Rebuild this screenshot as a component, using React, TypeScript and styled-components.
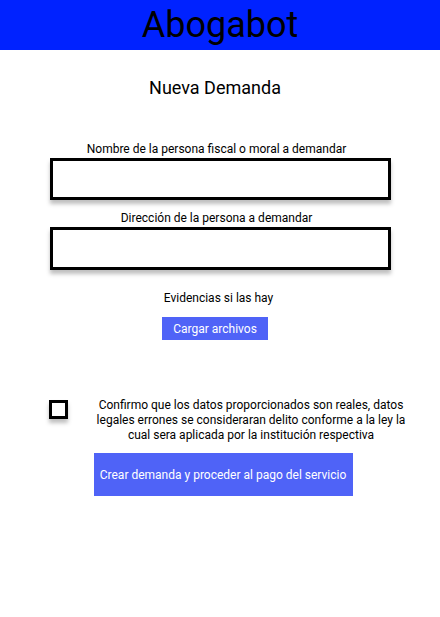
import styled, { createGlobalStyle } from 'styled-components';

const GlobalStyle = createGlobalStyle`
  body {
    margin: 0;
    font-family: Roboto, 'Liberation Sans', sans-serif;
    background: #fff;
    color: #000;
  }
`;

const Page = styled.div`
  width: 440px;
  min-height: 617px;
  display: flex;
  flex-direction: column;
`;

const Header = styled.header`
  height: 50px;
  background: #0022ff;
  display: flex;
  align-items: center;
  justify-content: center;
`;

const Brand = styled.h1`
  margin: 0;
  font-size: 36px;
  font-weight: 400;
  line-height: 50px;
`;

const Form = styled.main`
  display: flex;
  flex-direction: column;
  align-items: center;
`;

const Title = styled.h2`
  margin: 27px 10px 0 0;
  font-size: 18px;
  font-weight: 400;
  line-height: 21px;
  text-align: center;
`;

const Label = styled.label<{ top: number }>`
  margin: ${({ top }) => top}px 7px 0 0;
  font-size: 12px;
  line-height: 14px;
`;

const Field = styled.input<{ h: number }>`
  box-sizing: border-box;
  width: 341px;
  height: ${({ h }) => h}px;
  margin: 2px 0 0 0;
  border: 3px solid #000;
  outline: none;
  background: #fff;
  box-shadow: 0 4px 4px rgba(0, 0, 0, 0.25);
`;

const Caption = styled.p`
  margin: 21px 3px 0 0;
  font-size: 12px;
  line-height: 14px;
`;

// shift nudges the button's centre sideways, the mockup isn't perfectly centred
const Button = styled.button<{ w: number; h: number; top: number; shift: number }>`
  width: ${({ w }) => w}px;
  height: ${({ h }) => h}px;
  margin-top: ${({ top }) => top}px;
  margin-left: ${({ shift }) => (shift > 0 ? shift * 2 : 0)}px;
  margin-right: ${({ shift }) => (shift < 0 ? -shift * 2 : 0)}px;
  border: none;
  background: #4f63f7;
  color: #fff;
  font-family: Roboto, 'Liberation Sans', sans-serif;
  font-size: 12px;
  padding: 0;
`;

const ConfirmRow = styled.div`
  width: 358px;
  margin: 58px 0 0 16px;
  display: flex;
  align-items: flex-start;
  gap: 27px;
`;

const Check = styled.span`
  box-sizing: border-box;
  flex: none;
  width: 19px;
  height: 19px;
  margin-top: 2px;
  border: 3px solid #000;
  background: #fff;
  box-shadow: 0 4px 4px rgba(0, 0, 0, 0.25);
`;

const ConfirmText = styled.p`
  margin: 0;
  width: 312px;
  font-size: 12px;
  line-height: 15px;
  text-align: center;
`;

export default function App() {
  return (
    <Page>
      <GlobalStyle />
      <Header>
        <Brand>Abogabot</Brand>
      </Header>
      <Form>
        <Title>Nueva Demanda</Title>
        <Label top={44}>Nombre de la persona fiscal o moral a demandar</Label>
        <Field h={42} />
        <Label top={11}>Dirección de la persona a demandar</Label>
        <Field h={43} />
        <Caption>Evidencias si las hay</Caption>
        <Button w={106} h={23} top={12} shift={-5}>
          Cargar archivos
        </Button>
        <ConfirmRow>
          <Check />
          <ConfirmText>
            Confirmo que los datos proporcionados son reales, datos legales errones se
            consideraran delito conforme a la ley la cual sera aplicada por la institución
            respectiva
          </ConfirmText>
        </ConfirmRow>
        <Button w={259} h={43} top={10} shift={3}>
          Crear demanda y proceder al pago del servicio
        </Button>
      </Form>
    </Page>
  );
}
